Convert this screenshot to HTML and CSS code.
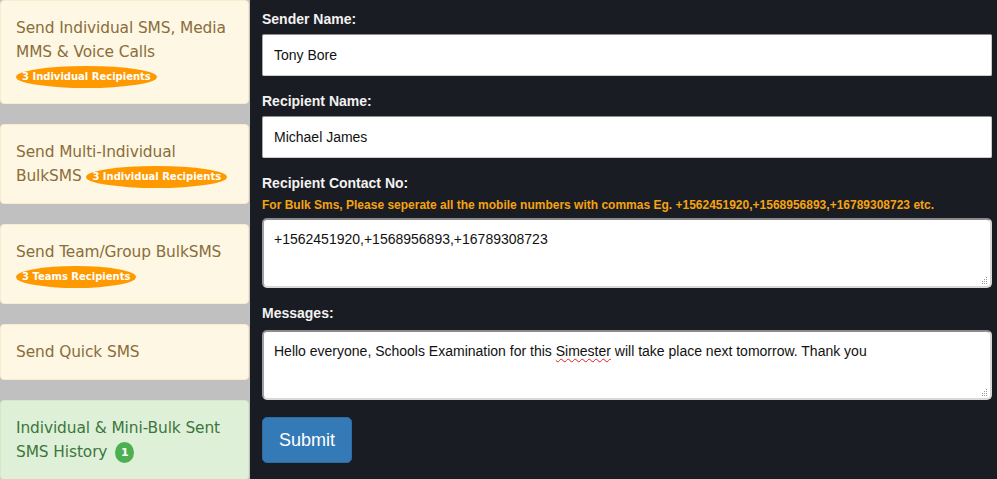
FILE: index.html
```html
<!DOCTYPE html>
<html>
<head>
<meta charset="utf-8">
<title>Send SMS</title>
<link rel="stylesheet" href="styles.css">
</head>
<body>
<div class="page">
  <aside class="sidebar">
    <div class="card card-warn">
      <div class="card-title">Send Individual SMS, Media MMS &amp; Voice Calls</div>
      <span class="pill">3 Individual Recipients</span>
    </div>
    <div class="card card-warn">
      <div class="card-title nowrap-last">Send Multi-Individual<br>BulkSMS <span class="pill">3 Individual Recipients</span></div>
    </div>
    <div class="card card-warn">
      <div class="card-title">Send Team/Group BulkSMS</div>
      <span class="pill">3 Teams Recipients</span>
    </div>
    <div class="card card-warn">
      <div class="card-title">Send Quick SMS</div>
    </div>
    <div class="card card-ok">
      <div class="card-title">Individual &amp; Mini-Bulk Sent SMS History <span class="count">1</span></div>
    </div>
  </aside>
  <main class="main">
    <div class="group">
      <div class="label">Sender Name:</div>
      <div class="field">Tony Bore</div>
    </div>
    <div class="group">
      <div class="label">Recipient Name:</div>
      <div class="field">Michael James</div>
    </div>
    <div class="group">
      <div class="label">Recipient Contact No:</div>
      <div class="note">For Bulk Sms, Please seperate all the mobile numbers with commas Eg. +1562451920,+1568956893,+16789308723 etc.</div>
      <div class="field area">+1562451920,+1568956893,+16789308723<svg class="grip" width="7" height="7" viewBox="0 0 7 7"><rect x="5" y="0" width="1" height="1"/><rect x="3" y="2" width="1" height="1"/><rect x="5" y="2" width="1" height="1"/><rect x="1" y="4" width="1" height="1"/><rect x="3" y="4" width="1" height="1"/><rect x="5" y="4" width="1" height="1"/><rect x="1" y="6" width="1" height="1"/><rect x="3" y="6" width="1" height="1"/><rect x="5" y="6" width="1" height="1"/></svg></div>
    </div>
    <div class="group">
      <div class="label label-msg">Messages:</div>
      <div class="field area">Hello everyone, Schools Examination for this <span class="typo">Simester</span> will take place next tomorrow. Thank you<svg class="grip" width="7" height="7" viewBox="0 0 7 7"><rect x="5" y="0" width="1" height="1"/><rect x="3" y="2" width="1" height="1"/><rect x="5" y="2" width="1" height="1"/><rect x="1" y="4" width="1" height="1"/><rect x="3" y="4" width="1" height="1"/><rect x="5" y="4" width="1" height="1"/><rect x="1" y="6" width="1" height="1"/><rect x="3" y="6" width="1" height="1"/><rect x="5" y="6" width="1" height="1"/></svg></div>
    </div>
    <button class="btn">Submit</button>
  </main>
</div>
</body>
</html>
```
FILE: styles.css
```css
* { box-sizing: border-box; }
html, body { margin: 0; padding: 0; height: 100%; }
body {
  background: #1a1c24;
  font-family: "Liberation Sans", Arial, sans-serif;
  overflow: hidden;
}
.page {
  display: flex;
  height: 479px;
}
.sidebar {
  width: 250px;
  flex: none;
  background: #c0c0c0;
  padding-right: 1px;
  display: flex;
  flex-direction: column;
  gap: 20px;
}
.card {
  border: 1px solid #faebcc;
  border-radius: 4px;
  padding: 15px 15px;
  font-family: "Comic Sans MS", "DejaVu Sans", sans-serif;
  font-size: 15.4px;
  line-height: 24px;
  letter-spacing: -0.1px;
}
.card-title { white-space: normal; }
.nowrap-last { white-space: nowrap; }
.card-warn {
  background: #fdf7e3;
  color: #8a6d3b;
}
.card-ok {
  background: #dff0d8;
  border-color: #d6e9c6;
  color: #3c763d;
  flex: 1;
}
.pill {
  display: inline-block;
  background: #ff9900;
  color: #fff;
  font-weight: bold;
  font-size: 10px;
  line-height: 16px;
  padding: 3px 6px;
  border-radius: 50%;
  vertical-align: middle;
  letter-spacing: 0;
  white-space: nowrap;
}
.count {
  display: inline-flex;
  align-items: center;
  justify-content: center;
  width: 19px;
  height: 21px;
  border-radius: 50%;
  background: #4caf50;
  color: #fff;
  font-weight: bold;
  font-size: 11px;
  line-height: 1;
  vertical-align: middle;
  margin-left: 3px;
}
.main {
  flex: 1;
  padding: 9px 5px 0 12px;
}
.group { margin-bottom: 15px; }
.label {
  color: #f2f2f2;
  font-weight: bold;
  font-size: 14px;
  line-height: 20px;
  margin-bottom: 5px;
}
.label-msg { margin-bottom: 7px; }
.note {
  color: #f5a30f;
  font-weight: bold;
  font-size: 12px;
  line-height: 15px;
  margin-bottom: 5px;
}
.field {
  background: #fff;
  border: 1px solid #ccc;
  border-top-color: #8f8f8f;
  border-left-color: #a9a9a9;
  border-radius: 2px;
  height: 42px;
  padding: 10px 11px;
  font-size: 14px;
  line-height: 20px;
  color: #111;
}
.area {
  position: relative;
  height: 70px;
  border-radius: 5px;
  border: 2px solid #d8d8d8;
  border-top-color: #8c8c8c;
  border-left-color: #a0a0a0;
  padding: 9px 10px;
}
.grip {
  position: absolute;
  right: 2px;
  bottom: 2px;
  fill: #999;
}
.typo {
  text-decoration: underline wavy #e02020;
  text-decoration-thickness: 1px;
  text-underline-offset: 2px;
}
.btn {
  display: block;
  margin-top: 17px;
  width: 90px;
  height: 46px;
  background: #337ab7;
  border: 1px solid #2e6da4;
  border-radius: 5px;
  color: #fff;
  font-family: "Liberation Sans", Arial, sans-serif;
  font-size: 18px;
  padding: 0;
}
.group:last-of-type { margin-bottom: 0; }
```
